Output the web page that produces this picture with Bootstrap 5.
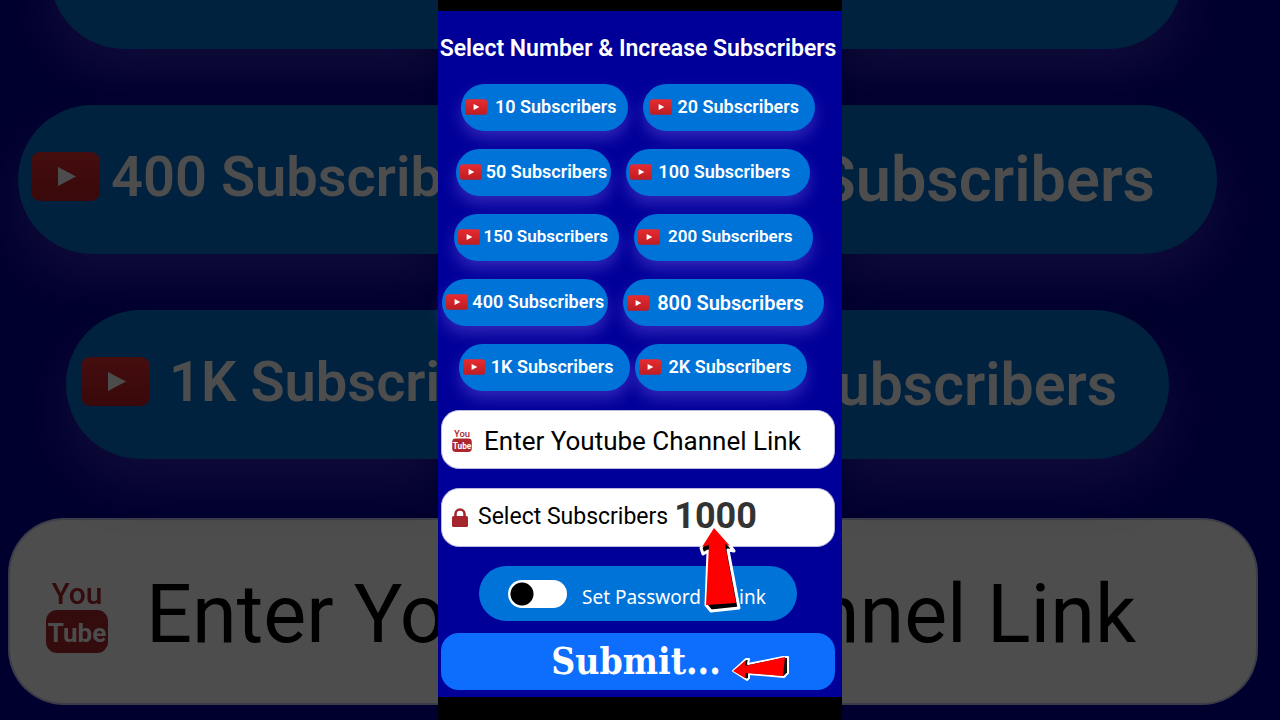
<!DOCTYPE html>
<html lang="en">
<head>
<meta charset="utf-8">
<meta name="viewport" content="width=device-width, initial-scale=1">
<title>Increase Subscribers</title>
<link href="https://cdn.jsdelivr.net/npm/bootstrap@5.3.0/dist/css/bootstrap.min.css" rel="stylesheet">
<style>
body{background:#000;font-family:Roboto,"Liberation Sans",sans-serif;overflow-x:hidden}
.stage{min-height:100vh}
/* dimmed enlarged side panes */
.pane{flex:1 1 0;min-width:0;overflow:hidden;background:#00002e}
.pane-rows{gap:56px;margin-top:-100px}
.pane .pill{height:149px;background:#00223f;color:#4d4d4d;font-size:56px;box-shadow:0 25px 48px rgba(40,28,75,.4)}
.pane-left .pill{border-radius:75px 0 0 75px;gap:11px;padding:0 0 6px 13px}
.pane-right .pill{border-radius:0 75px 75px 0;justify-content:flex-end;font-size:63px;padding-right:62px}
.pane-left .pill-a{margin-left:50px}.pane-left .pill-b{margin-left:18px}
.pane-left .pill-c{margin-left:66px;gap:19px;padding-left:15px}
.pane-right .pill-a{margin-right:97px}.pane-right .pill-b{margin-right:63px}
.pane-right .pill-c{margin-right:111px;padding-right:52px;font-size:59px}
.pane .yt{width:69px;height:49px}
.pane .field{margin-top:59px;height:187px;background:#4d4d4d;font-size:81px;border:2px solid #3c3c48;padding-top:6px}
.pane-left .field{margin-left:8px;border-radius:56px 0 0 56px;border-right:0;padding-left:36px;gap:38px}
.pane-right .field{margin-right:22px;border-radius:0 56px 56px 0;border-left:0;justify-content:flex-end;padding-right:120px}
.pane .logo-yt{width:62px;height:76px}
/* phone column */
.phone{flex:0 1 404px;background:#000099;border-top:11px solid #000;border-bottom:23px solid #000;padding:0 7px 7px 3px}
.title{font-size:23px;line-height:28px;font-weight:600;color:#fff;margin:24px -3px 21px;white-space:nowrap;text-align:center}
.pill{display:flex;align-items:center;border:0;border-radius:999px;background:#0073d9;color:#fff;font-weight:600;line-height:1;white-space:nowrap}
.rows{gap:18px}
.rows>div{display:flex;justify-content:center;gap:15px;padding-right:10px}
.rows>div:first-child{padding-right:0}
.rows>div:last-child{gap:5px}
.rows .pill{height:47px;font-size:18px;padding:0 11px 2px 4px;gap:6px;box-shadow:0 8px 15px rgba(120,90,230,.4)}
.rows .small-text{font-size:17px}
.rows .big-text{font-size:20px;padding-bottom:0}
.rows .gap-tight{gap:4px}.rows .gap-wide{gap:8px}
.rows .start-8{padding-left:7px}
.rows .end-4{padding-right:4px}.rows .end-16{padding-right:16px}.rows .end-20{padding-right:20px}
.yt{width:22px;height:16px;flex:none}
.field{display:flex;align-items:center;background:#fff;color:#000;border:1px solid #b8b8e0;border-radius:18px;height:59px;white-space:nowrap}
.phone .field{padding:0 11px 0 10px;gap:12px}
.field input{border:0;outline:0;background:none;min-width:0;color:#000}
.link-input{font-size:26px;padding:3px 0 0}
.link-input::placeholder{color:#000;opacity:1}
.phone .field-count{gap:6px}
.count-label{font-size:23px;padding-left:4px}
.field .count-input{font-size:36px;font-weight:700;width:100px;color:#333;padding:0 0 4px}
.logo-yt{width:20px;height:24px;flex:none}
/* last, so that it also dims the symbols in the panes */
.pane svg{filter:brightness(.3)}
.lock{width:16px;height:20px;flex:none}
.field-gap{margin-top:19px}
.pass{height:55px;width:318px;border-radius:28px;background:#0073d9;color:#fff;font:19px "Noto Sans","Open Sans",sans-serif;padding-left:29px;gap:15px;white-space:nowrap}
.pass label{padding-top:6px}
.switch{appearance:none;width:59px;height:28px;border-radius:14px;background:radial-gradient(circle at 14px 14px,#000 11px,#fff 12px);margin:0;flex:none}
.submit{height:57px;margin-top:12px;padding:0 10px 0 6px;border:0;border-radius:18px;background:#0d6efd;color:#fff;font:700 37px/1 "DejaVu Serif Condensed","DejaVu Serif","Liberation Serif",serif}
.arrow-up{position:absolute;left:260px;top:513px;width:46px;height:92px}
.arrow-left{position:absolute;left:292px;top:641px;width:62px;height:34px}
</style>
</head>
<body>
<svg class="position-absolute" width="0" height="0" aria-hidden="true">
<defs><linearGradient id="redg" x1="0" y1="0" x2="0" y2="1"><stop offset="0" stop-color="#e62c31"/><stop offset="1" stop-color="#bd1c22"/></linearGradient></defs>
<symbol id="play" viewBox="0 0 69 49"><rect width="69" height="49" rx="9" fill="url(#redg)"/><path d="M27 15v19l18-9.500z" fill="#fff"/></symbol>
<symbol id="ytlogo" viewBox="0 0 62 76"><text x="31" y="27" text-anchor="middle" font-family="Roboto,sans-serif" font-weight="500" font-size="30" fill="#ac272c">You</text><rect y="33" width="62" height="43" rx="11" fill="#ac272c"/><text x="31" y="65" text-anchor="middle" font-family="Roboto,sans-serif" font-weight="700" font-size="26" fill="#fff">Tube</text></symbol>
</svg>
<div class="stage d-flex">
  <div class="pane pane-left" aria-hidden="true">
    <div class="pane-rows d-flex flex-column">
      <div class="pill pill-a"></div>
      <div class="pill pill-b"><svg class="yt"><use href="#play"/></svg>400 Subscrib</div>
      <div class="pill pill-c"><svg class="yt"><use href="#play"/></svg>1K Subscri</div>
    </div>
    <div class="field"><svg class="logo-yt"><use href="#ytlogo"/></svg>Enter Yo</div>
  </div>

  <main class="phone position-relative d-flex flex-column">
    <h1 class="title">Select Number &amp; Increase Subscribers</h1>
    <div class="rows d-flex flex-column">
      <div><button type="button" class="pill gap-wide"><svg class="yt"><use href="#play"/></svg>10 Subscribers</button><button type="button" class="pill start-8 end-16"><svg class="yt"><use href="#play"/></svg>20 Subscribers</button></div>
      <div><button type="button" class="pill gap-tight end-4"><svg class="yt"><use href="#play"/></svg>50 Subscribers</button><button type="button" class="pill end-20"><svg class="yt"><use href="#play"/></svg>100 Subscribers</button></div>
      <div><button type="button" class="pill small-text gap-tight"><svg class="yt"><use href="#play"/></svg>150 Subscribers</button><button type="button" class="pill small-text gap-wide end-20"><svg class="yt"><use href="#play"/></svg>200 Subscribers</button></div>
      <div><button type="button" class="pill gap-tight end-4"><svg class="yt"><use href="#play"/></svg>400 Subscribers</button><button type="button" class="pill big-text gap-wide end-20"><svg class="yt"><use href="#play"/></svg>800 Subscribers</button></div>
      <div><button type="button" class="pill end-16"><svg class="yt"><use href="#play"/></svg>1K Subscribers</button><button type="button" class="pill end-16 gap-wide"><svg class="yt"><use href="#play"/></svg>2K Subscribers</button></div>
    </div>
    <form class="d-flex flex-column" onsubmit="return false">
      <div class="field field-gap"><svg class="logo-yt"><use href="#ytlogo"/></svg><input class="link-input flex-grow-1" type="text" aria-label="Youtube channel link" placeholder="Enter Youtube Channel Link"></div>
      <div class="field field-count field-gap"><svg class="lock" viewBox="0 0 16 20"><path d="M3.500 9V6a4.500 4.500 0 0 1 9 0v3" fill="none" stroke="#a4262c" stroke-width="2.500"/><rect y="8" width="16" height="11" rx="1.500" fill="#a4262c"/></svg><label class="count-label" for="count">Select Subscribers</label><input id="count" class="count-input" type="text" value="1000"></div>
      <div class="pass field-gap d-flex align-items-center align-self-center"><input id="pw" class="switch" type="checkbox" role="switch"><label for="pw">Set Password to Link</label></div>
      <button type="submit" class="submit">Submit...</button>
    </form>
    <svg class="arrow-up" viewBox="0 0 46 92"><g transform="translate(-698 -524)"><path d="M714 528 701 548 703 554 708 551 706 605 711 611 739 608 728 550 734 551 731 547Z" fill="#000" stroke="#fff" stroke-width="3" stroke-linejoin="round"/><path d="M714 528 702 547 709 545 706 605 736 603 725 544 730 546Z" fill="#f00"/></g></svg>
    <svg class="arrow-left" viewBox="0 0 62 34"><g transform="translate(-730 -652)"><path d="M733 671 746 659 749 659 748 664 783 657 788 657 788 673 784 677 749 674 749 678 747 680Z" fill="#111" stroke="#fff" stroke-width="2" stroke-linejoin="round"/><path d="M733 671 746 660 745 666 785 657 783 676 746 673 745 678Z" fill="#f00"/></g></svg>
  </main>

  <div class="pane pane-right" aria-hidden="true">
    <div class="pane-rows d-flex flex-column">
      <div class="pill pill-a"></div>
      <div class="pill pill-b">Subscribers</div>
      <div class="pill pill-c">ubscribers</div>
    </div>
    <div class="field">nnel Link</div>
  </div>
</div>
<script src="https://cdn.jsdelivr.net/npm/bootstrap@5.3.0/dist/js/bootstrap.bundle.min.js"></script>
</body>
</html>
